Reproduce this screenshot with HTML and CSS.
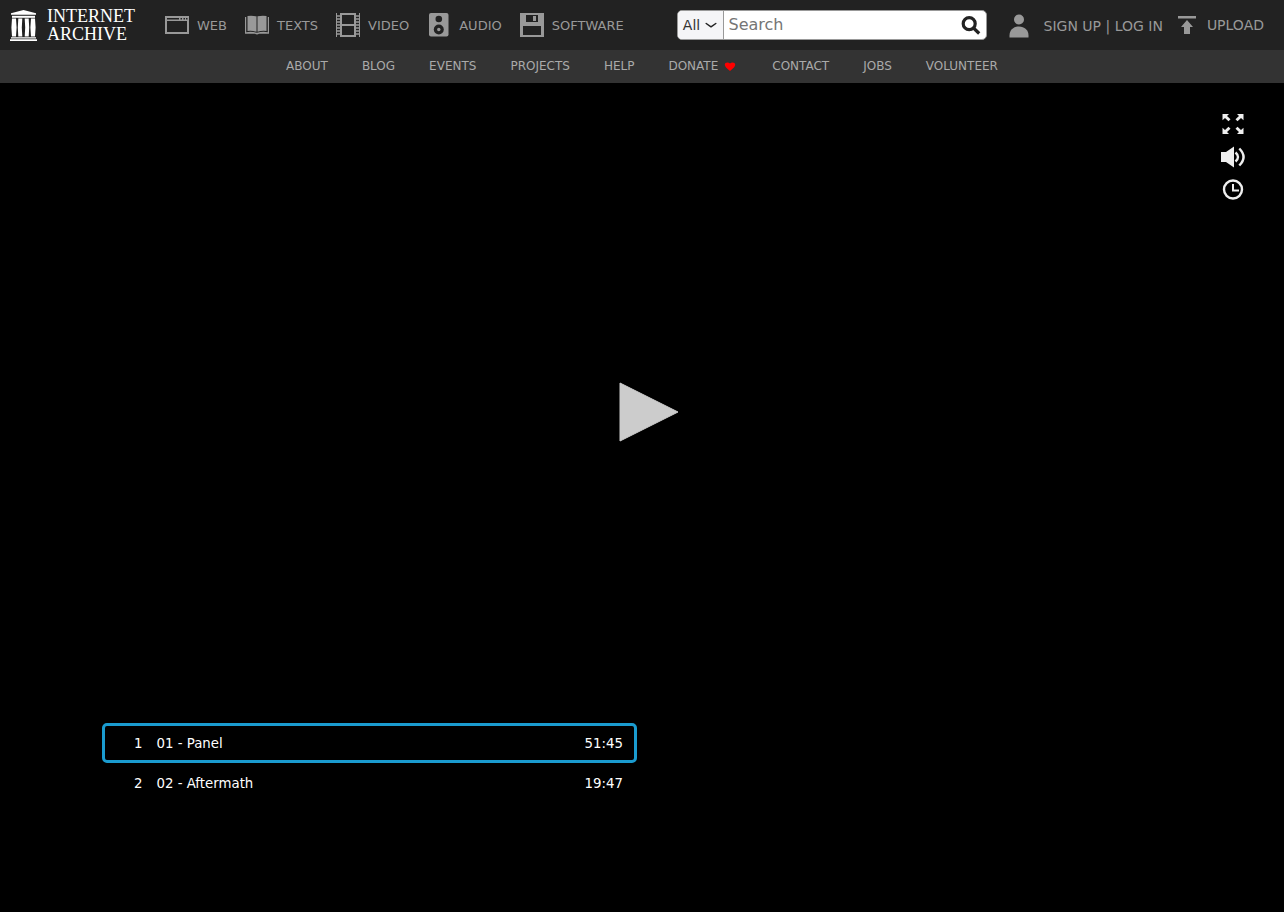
FILE: index.html
```html
<!DOCTYPE html>
<html lang="en">
<head>
<meta charset="utf-8">
<title>Internet Archive</title>
<link rel="stylesheet" href="styles.css">
</head>
<body>
<header>
  <div class="topbar">
    <a class="logo" href="#">
      <svg width="27" height="31" viewBox="0 0 27 31" fill="#fff" aria-hidden="true">
        <path d="M13.500 0 26 3.200v1.600H1V3.200z"/>
        <path d="M2 5.800h23v2H2z"/>
        <path d="M2 8.600h4l.6 9-.6 9H2l-.6-9zM8.300 8.600h4l-.5 9 .5 9h-4l-.5-9zM14.700 8.600h4l.5 9-.5 9h-4l.5-9zM21 8.600h4l.6 9-.6 9h-4l-.6-9z"/>
        <path d="M1 27.200h25v1.300H1zM0 29.200h27V31H0z"/>
      </svg>
      <span class="wordmark"><span>INTERNET</span><span>ARCHIVE</span></span>
    </a>
    <nav class="media" aria-label="Media types">
      <a href="#">
        <svg width="24" height="24" viewBox="0 0 24 24" fill="#999" aria-hidden="true"><path fill-rule="evenodd" d="M0 3h24v18H0zM2 8v11h20V8zM2 5v1.500h12V5zM15.500 5v1.500h1.500V5zM18.500 5v1.500h1.500V5zM21 5v1.500h1.500V5z"/></svg>
        <span>WEB</span></a>
      <a href="#">
        <svg width="24" height="24" viewBox="0 0 24 24" fill="#999" aria-hidden="true"><path d="M2.500 3Q7 2.400 11.500 3.300V18.800Q7 17.400 2.500 18zM12.500 3.300Q17 2.400 21.500 3V18Q17 17.400 12.500 18.800z"/><path d="M0 4h1.200v15.200Q7 18.300 12 19.800 17 18.300 22.800 19.200V4H24v16.800H14Q12 22 10 20.800H0z"/></svg>
        <span>TEXTS</span></a>
      <a href="#">
        <svg width="24" height="24" viewBox="0 0 24 24" aria-hidden="true"><g fill="none" stroke="#999"><path stroke-width="2" d="M5 1h14v22H5zM5 12h14"/><path d="M.5 0v24M23.500 0v24"/><path stroke-width="1.300" d="M0 3h4M0 6h4M0 9h4M0 12h4M0 15h4M0 18h4M0 21h4M20 3h4M20 6h4M20 9h4M20 12h4M20 15h4M20 18h4M20 21h4"/></g></svg>
        <span>VIDEO</span></a>
      <a href="#">
        <svg width="24" height="24" viewBox="0 0 24 24" aria-hidden="true"><rect x="2" y="0" width="19.500" height="23.500" rx="2" fill="#999"/><g fill="#222"><circle cx="11.800" cy="6" r="3.300"/><circle cx="11.800" cy="16.500" r="5"/></g><circle cx="11.800" cy="16.500" r="1.700" fill="#999"/></svg>
        <span>AUDIO</span></a>
      <a href="#">
        <svg width="24" height="24" viewBox="0 0 24 24" aria-hidden="true"><path fill="#999" d="M0 0h24v24H0z"/><path fill="#222" d="M6 2h12v7H6zM3 13h18v9H3z"/><path fill="#999" d="M13 3h3v5h-3z"/></svg>
        <span>SOFTWARE</span></a>
    </nav>
    <form class="search" role="search">
      <button class="scope" type="button">All
        <svg width="12" height="8" viewBox="0 0 12 8" fill="none" stroke="#222" stroke-width="1.500" stroke-linecap="round" stroke-linejoin="round" aria-hidden="true"><path d="M1.200 2.500 6 5.800l4.800-3.300"/></svg>
      </button>
      <input type="search" placeholder="Search" aria-label="Search">
      <button class="go" type="submit" aria-label="Search the archive">
        <svg width="20" height="20" viewBox="0 0 20 20" fill="none" stroke="#222" aria-hidden="true"><circle cx="8.200" cy="7.700" r="6" stroke-width="3.200"/><path stroke-width="3.200" d="m12.500 12 5.700 5.500"/></svg>
      </button>
    </form>
    <div class="account">
      <svg width="20" height="24" viewBox="0 0 20 24" fill="#999" aria-hidden="true"><circle cx="10" cy="5.500" r="5"/><path d="M.5 23.500v-2C.5 16 4.500 12.500 10 12.500s9.500 3.500 9.500 9v2z"/></svg>
      <span><a href="#">SIGN UP</a> | <a href="#">LOG IN</a></span>
    </div>
    <a class="upload" href="#">
      <svg width="18" height="20" viewBox="0 0 18 20" fill="#999" aria-hidden="true"><path d="M0 1h18v2.500H0zM9 5l6 7h-3v7H6v-7H3z"/></svg>
      <span>UPLOAD</span></a>
  </div>
  <nav class="subnav" aria-label="About the archive">
    <a href="#">ABOUT</a>
    <a href="#">BLOG</a>
    <a href="#">EVENTS</a>
    <a href="#">PROJECTS</a>
    <a href="#">HELP</a>
    <a class="donate" href="#">DONATE
      <svg width="14" height="10" viewBox="0 0 14 10" fill="#f00" aria-hidden="true"><path d="M6 9C2.500 6 .8 4.500.8 2.700.8.300 4.200-.2 6 1.500 7.800-.2 11.200.300 11.200 2.700 11.200 4.500 9.500 6 6 9z"/></svg></a>
    <a href="#">CONTACT</a>
    <a href="#">JOBS</a>
    <a href="#">VOLUNTEER</a>
  </nav>
</header>
<main>
  <section class="stage" aria-label="Player">
    <button class="play" type="button" aria-label="Play">
      <svg width="74" height="60" viewBox="0 0 74 60" aria-hidden="true"><path fill="#ccc" stroke="#ccc" stroke-linejoin="round" d="M15 1v58L73 30z"/></svg>
    </button>
    <div class="controls">
      <button type="button" aria-label="Full screen">
        <svg width="24" height="24" viewBox="0 0 24 24" aria-hidden="true"><g fill="#eee"><path id="arrow" d="M1.500 2H8L6 4l3.500 3.300-2 2L4 5.900l-2.500 2.300z"/><use href="#arrow" transform="matrix(-1 0 0 1 24 0)"/><use href="#arrow" transform="matrix(1 0 0 -1 0 24)"/><use href="#arrow" transform="rotate(180 12 12)"/></g></svg>
      </button>
      <button type="button" aria-label="Volume">
        <svg width="24" height="24" viewBox="0 0 24 24" aria-hidden="true"><path fill="#eee" d="M0 7h5L13 1.500v21L5 17H0z"/><path fill="none" stroke="#eee" stroke-width="2.400" d="M14.500 7.500q5 4.500 0 9M18.300 3.500q8.500 8.500 0 17"/></svg>
      </button>
      <button type="button" aria-label="Playback speed">
        <svg width="24" height="24" viewBox="0 0 24 24" fill="none" stroke="#eee" stroke-width="2.400" aria-hidden="true"><circle cx="12" cy="11.500" r="9"/><path stroke-width="2" d="M12 6v6.500h6"/></svg>
      </button>
    </div>
  </section>
  <div class="playlist">
    <div class="tracks">
      <button class="track current" type="button"><span>1</span><span>01 - Panel</span><time>51:45</time></button>
      <button class="track" type="button"><span>2</span><span>02 - Aftermath</span><time>19:47</time></button>
    </div>
  </div>
</main>
</body>
</html>
```
FILE: styles.css
```css
* {
  box-sizing: border-box;
}

body {
  margin: 0;
  min-height: 100vh;
  background: #000;
  color: #999;
  font-family: "DejaVu Sans", sans-serif;
}

a {
  color: inherit;
  text-decoration: none;
}

button,
input {
  padding: 0;
  border: 0;
  background: none;
  font-family: inherit;
}

svg {
  display: block;
  flex: none;
}

.topbar {
  display: flex;
  align-items: center;
  height: 50px;
  padding: 0 20px 0 10px;
  background: #222;
  font-size: 14px;
  white-space: nowrap;
}

.logo {
  display: flex;
  align-items: center;
  gap: 10px;
  width: 132px;
  margin-right: 23px;
  color: #fff;
}

.wordmark {
  display: grid;
  font: 18px/18px "Liberation Serif", serif;
}

.media {
  display: flex;
  gap: 18px;
  font-size: 13px;
}

.media a,
.account,
.upload {
  display: flex;
  align-items: center;
  gap: 8px;
}

.search {
  display: flex;
  align-items: center;
  width: 310px;
  height: 30px;
  margin-left: auto;
  overflow: hidden;
  border: 1px solid #999;
  border-radius: 5px;
  background: #fff;
}

.scope {
  display: flex;
  align-items: center;
  justify-content: center;
  gap: 5px;
  width: 46px;
  height: 100%;
  border-right: 1px solid #999;
  background: #f5f5f7;
  color: #333;
  font-size: 14px;
}

.search input {
  flex: 1;
  min-width: 0;
  padding: 0 5px 2px;
  outline: 0;
  color: #222;
  font-size: 16px;
}

.search input::placeholder {
  color: #757575;
}

.go {
  padding: 2px 5px 0 0;
}

.account {
  gap: 15px;
  margin: 2px 15px 0 22px;
}

.upload {
  gap: 11px;
}

.subnav {
  display: flex;
  justify-content: center;
  gap: 34px;
  background: #333;
  color: #aaa;
  font-size: 12px;
  line-height: 33px;
}

.donate {
  display: flex;
  align-items: center;
  gap: 6px;
}

.stage {
  position: relative;
  display: flex;
  align-items: center;
  justify-content: center;
  min-height: 640px;
  padding-top: 18px;
}

.controls {
  position: absolute;
  top: 29px;
  right: 39px;
  display: grid;
  gap: 9px;
}

.playlist {
  display: grid;
  grid-template-columns: 1fr 1fr;
  gap: 10px;
  padding: 0 102px;
}

.track {
  display: flex;
  width: 100%;
  height: 40px;
  align-items: center;
  gap: 14px;
  padding: 0 11px 0 29px;
  border: 3px solid transparent;
  border-radius: 5px;
  color: #fff;
}

.track time {
  margin-left: auto;
}

.current {
  border-color: #1a9bcf;
}
```
